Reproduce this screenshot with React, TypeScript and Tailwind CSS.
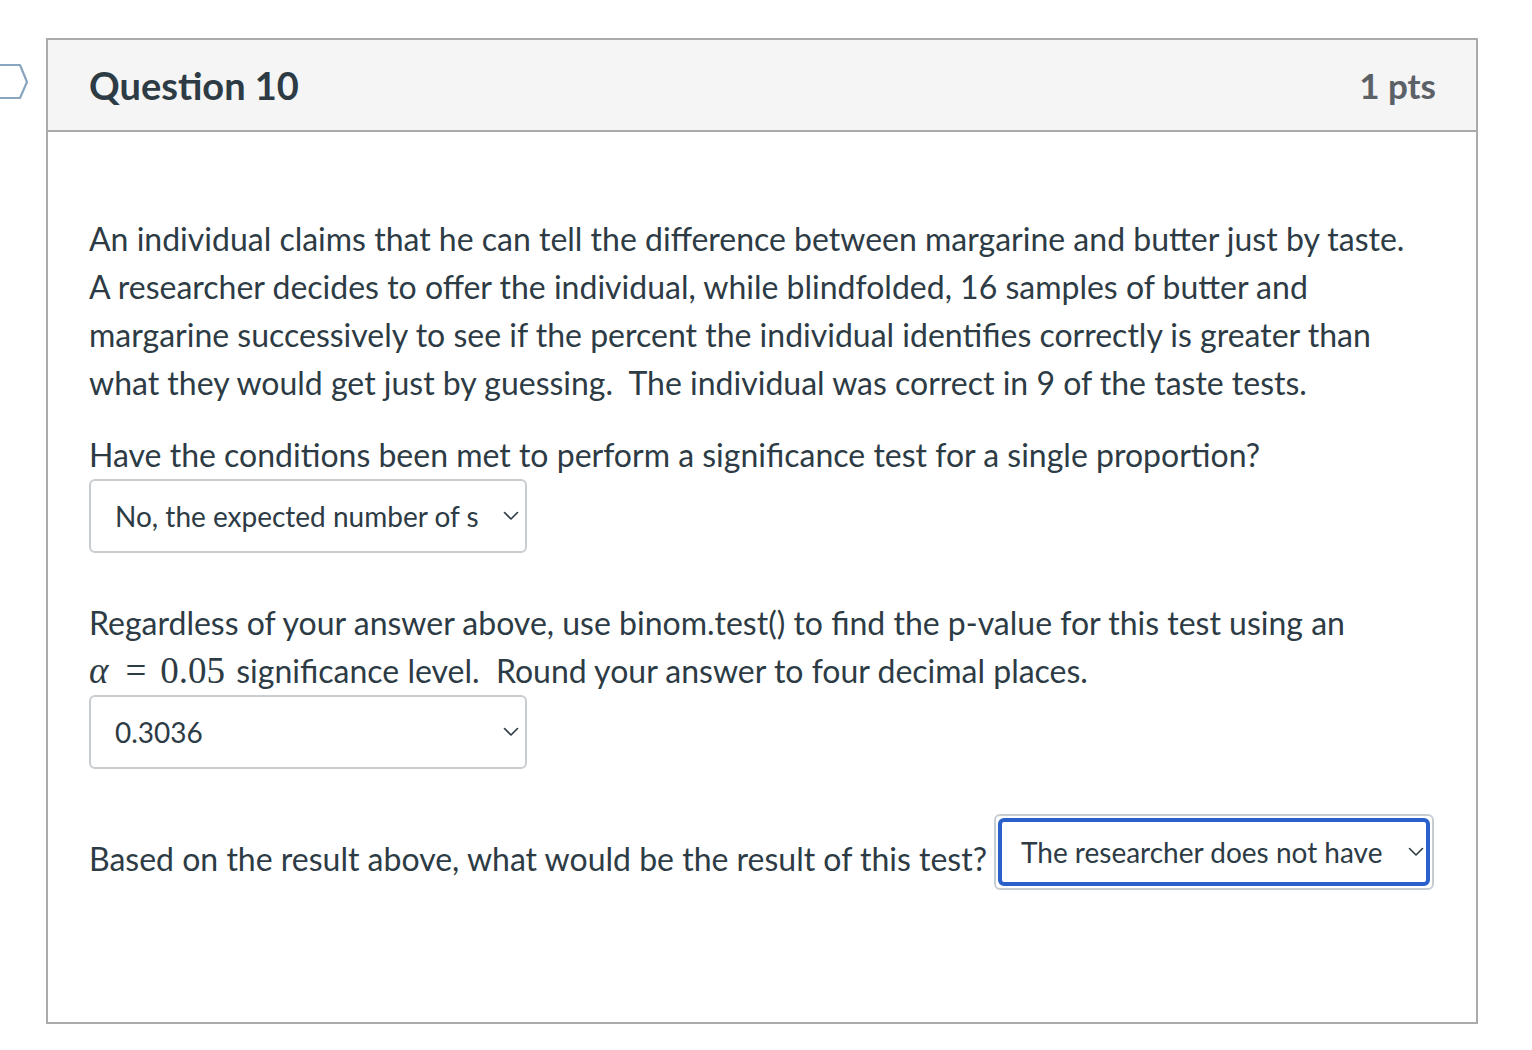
import React from "react";

const Chevron = () => (
  <svg width="16" height="10" viewBox="0 0 16 10" fill="none">
    <path d="M1.5 1.5 L8 8 L14.5 1.5" stroke="#2d3b45" strokeWidth="1.6" strokeLinecap="round" strokeLinejoin="round" />
  </svg>
);

export default function App() {
  const lato = { fontFamily: "Lato, 'Noto Sans', sans-serif" };
  const serif = { fontFamily: "'Liberation Serif', 'DejaVu Serif', serif" };
  return (
    <div className="relative w-[1532px] h-[1050px] bg-white text-[#2d3b45]" style={lato}>
      <svg className="absolute left-0 top-[60px]" width="34" height="44" viewBox="0 0 34 44" fill="none">
        <path d="M-10 5 H20 L27 22 L20 38 H-10" stroke="#8aa5c0" strokeWidth="2.2" strokeLinejoin="round" />
      </svg>
      <div className="absolute left-[46px] top-[38px] w-[1432px] border-2 border-[#aaaaaa]">
        <div className="h-[92px] bg-[#f5f5f5] border-b-2 border-[#aaaaaa] flex items-center justify-between pl-[41px] pr-[40px]">
          <div className="text-[38px] font-bold text-[#2d3b45]">Question 10</div>
          <div className="text-[35px] font-bold text-[#5b6166]">1 pts</div>
        </div>
        <div className="pl-[41px] pr-[40px] pt-[83px] pb-[132px] text-[32px] leading-[48px]">
          <div className="pr-[20px]">
            <p className="mb-[24px]">
              An individual claims that he can tell the difference between margarine and butter just by taste. A researcher decides to offer the individual, while blindfolded, 16 samples of butter and margarine successively to see if the percent the individual identifies correctly is greater than what they would get just by guessing.&nbsp; The individual was correct in 9 of the taste tests.
            </p>
            <p>Have the conditions been met to perform a significance test for a single proportion?</p>
          </div>
          <div className="w-[438px] h-[74px] border-2 border-[#c7cdd1] rounded-[6px] flex items-center justify-between pl-[24px] pr-[6px]">
            <span className="text-[28px]">No, the expected number of s</span>
            <Chevron />
          </div>
          <p className="mt-[46px] pr-[20px]">
            Regardless of your answer above, use binom.test() to find the p-value for this test using an{" "}
            <span style={serif} className="text-[37px] whitespace-nowrap">
              <i>α</i>
              <span className="ml-[17px] mr-[14px]">=</span>
              0.05
            </span>
            <span className="ml-[3px]"> </span>
            significance level.&nbsp; Round your answer to four decimal places.
          </p>
          <div className="w-[438px] h-[74px] border-2 border-[#c7cdd1] rounded-[6px] flex items-center justify-between pl-[24px] pr-[6px]">
            <span className="text-[28px]">0.3036</span>
            <Chevron />
          </div>
          <div className="mt-[45px] flex items-start">
            <span className="pt-[21px] mr-[7px] whitespace-nowrap">Based on the result above, what would be the result of this test?</span>
            <div className="w-[440px] shrink-0 h-[76px] border-2 border-[#c7cdd1] rounded-[6px] p-[2px]">
              <div className="w-full h-full border-[4px] border-[#2b5fc9] rounded-[6px] flex items-center justify-between pl-[19px] pr-[2px]">
                <span className="text-[28px]">The researcher does not have</span>
                <Chevron />
              </div>
            </div>
          </div>
        </div>
      </div>
    </div>
  );
}
